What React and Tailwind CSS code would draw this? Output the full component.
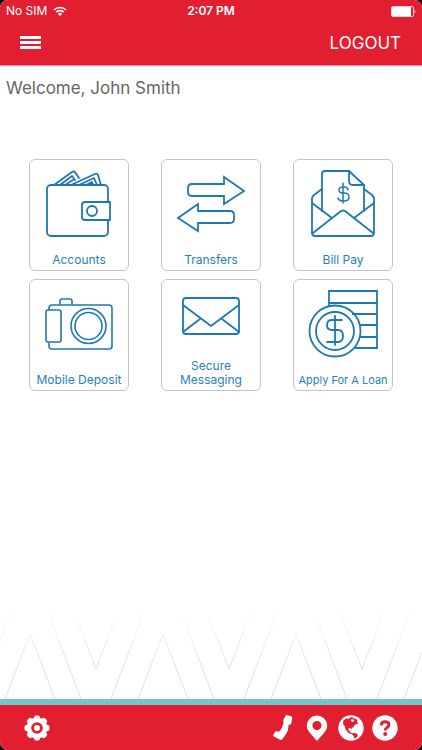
import React from "react";

const iconProps = {
  viewBox: "1 1 98 110",
  fill: "none",
  stroke: "currentColor",
  strokeWidth: 1.8,
  strokeLinejoin: "round",
  strokeLinecap: "round",
  className: "absolute inset-0 w-full h-full text-[#1f78b4]",
  "aria-hidden": true,
};

const WalletIcon = () => (
  <svg {...iconProps}>
    <path d="M79 42V30a4 4 0 0 0-4-4H22a4 4 0 0 0-4 4v43a4 4 0 0 0 4 4h53a4 4 0 0 0 4-4V62" />
    <path d="M81 43H56a3 3 0 0 0-3 3v12a3 3 0 0 0 3 3h25z" />
    <circle cx="63" cy="52" r="5" />
    <path d="M25 26l18-13q2-1 3 0l4 6M31 26l12-9 3 4M36 26l8-5M42 26l24-11q2-1 3 1l3 10M50 26l15-7 3 7M57 26l6-3 1 3" />
  </svg>
);

const TransfersIcon = () => (
  <svg {...iconProps} strokeLinejoin="miter">
    <path d="M63 25V18l20 14-20 13v-8H31q-4 0-4-4v-4q0-4 4-4z" />
    <path d="M37 52v-7L17 59l20 13v-8h32q4 0 4-4v-4q0-4-4-4z" />
  </svg>
);

const BillIcon = () => (
  <svg {...iconProps}>
    <path d="M29 52V15q0-3 3-3h24l15 14v26" />
    <path d="M56 12v10q0 4 4 4h11" />
    <path d="M29 30l-8 6q-2 2-2 4v34q0 3 3 3h56q3 0 3-3V40q0-2-2-4l-8-6" />
    <path d="M19 44l20 15M81 44L61 59M20 74l28-22q2-1 4 0l28 22" />
    <path
      d="M55 31q0-3-4-3h-1q-4 0-4 3t4 3h1q5 0 5 4t-5 4h-1q-4 0-5-3M50 24v20"
      strokeWidth="1.5"
    />
  </svg>
);

const CameraIcon = () => (
  <svg {...iconProps} strokeWidth="1.6">
    <path d="M20 31v-2q0-3 3-3h57q3 0 3 3v38q0 3-3 3H23q-3 0-3-3v-3" />
    <rect x="17" y="31" width="15" height="32" rx="2" />
    <path d="M31 25v-3q0-2 2-2h8q2 0 2 2v3" />
    <circle cx="59.5" cy="47" r="17.5" />
    <circle cx="59.5" cy="47" r="13.5" />
  </svg>
);

const MessageIcon = () => (
  <svg {...iconProps}>
    <rect x="22" y="19" width="56" height="36" rx="3" />
    <path d="M22 26l28 21 28-21M22 53l17-13M78 53L61 40" />
  </svg>
);

const LoanIcon = () => (
  <svg {...iconProps}>
    <path d="M36 27V12h48v57H62M36 24h48M59 35h25M67 46h17M66 58h18" strokeLinejoin="miter" strokeLinecap="butt" />
    <circle cx="42" cy="52" r="25.5" />
    <circle cx="42" cy="52" r="19" />
    <path d="M49 41H39q-5 0-5 5t5 5h6q5 0 5 6t-5 6H34M42 37v29" />
  </svg>
);

const tiles = [
  { label: "Accounts", Icon: WalletIcon },
  { label: "Transfers", Icon: TransfersIcon },
  { label: "Bill Pay", Icon: BillIcon },
  { label: "Mobile Deposit", Icon: CameraIcon },
  { label: "Secure Messaging", Icon: MessageIcon },
  { label: "Apply For A Loan", Icon: LoanIcon, small: true },
];

const Tile = ({ label, Icon, small }) => (
  <button
    type="button"
    className="relative flex h-28 items-end justify-center rounded-md border border-[#c4c4c4] bg-white pb-[3px] text-[#2a7fb8]"
  >
    <Icon />
    <span className={`relative leading-[14px] ${small ? "text-[11px] whitespace-nowrap" : "text-[12px]"}`}>
      {label}
    </span>
  </button>
);

const StatusBar = () => (
  <div className="grid grid-cols-3 items-center px-1.5 pt-1 text-[12px] leading-[14px]">
    <div className="flex items-center gap-1.5">
      <span>No SIM</span>
      <svg viewBox="0 0 14 10" className="h-2.5 w-3.5" fill="none" stroke="currentColor" strokeWidth="1.7" aria-hidden="true">
        <path d="M1 4a8.5 8.5 0 0 1 12 0M3.2 6.2a5.4 5.4 0 0 1 7.6 0" />
        <path d="M7 10L4.8 7.8a3.2 3.2 0 0 1 4.4 0z" fill="currentColor" stroke="none" />
      </svg>
    </div>
    <span className="text-center font-semibold">2:07 PM</span>
    <svg viewBox="0 0 25 11" className="h-[11px] w-[25px] justify-self-end" fill="currentColor" aria-hidden="true">
      <rect x="0.5" y="0.5" width="22" height="10" rx="1.5" fill="none" stroke="currentColor" strokeOpacity="0.8" />
      <rect x="1" y="1" width="19" height="9" />
      <path d="M23.5 4q2 1.5 0 3z" />
    </svg>
  </div>
);

// Faint chevron pattern that fades in towards the footer
const Chevrons = () => (
  <svg viewBox="0 0 422 87" className="block w-full" fill="none" stroke="url(#fade)" aria-hidden="true">
    <defs>
      <linearGradient id="fade" gradientUnits="userSpaceOnUse" x1="0" y1="0" x2="0" y2="87">
        <stop offset="0" stopColor="#dedede" stopOpacity="0.1" />
        <stop offset="0.6" stopColor="#dedede" stopOpacity="0.9" />
        <stop offset="1" stopColor="#dedede" />
      </linearGradient>
    </defs>
    {[-133, 0, 133, 266, 399].map((x) => (
      <path key={x} d={`M${x + 5} 87l25-65 25 65M${x + 48} 0l33 87M${x + 74} 0l22 57 22-57M${x + 111} 87l33-87`} />
    ))}
  </svg>
);

const GearIcon = () => (
  <svg viewBox="0 0 26 26" className="size-[26px]" fill="currentColor" aria-hidden="true">
    {[0, 45, 90, 135].map((angle) => (
      <rect key={angle} x="0.5" y="10" width="25" height="6" rx="2" transform={`rotate(${angle} 13 13)`} />
    ))}
    <circle cx="13" cy="13" r="10.5" />
    <circle cx="13" cy="13" r="4.4" fill="none" stroke="#e21f30" strokeWidth="2.8" />
  </svg>
);

const PhoneIcon = () => (
  <svg viewBox="0 0 26 26" className="size-[26px]" fill="currentColor" aria-hidden="true">
    <path d="M15.5 1q.6-1.200 2-.8l3.600 1q1.400.5 1.200 1.900l-.9 5.200q-.3 1.400-1.600 1.500l-1.400.2q.3 4-1.500 7.500-2 3.700-4.600 6.800-.9 1.100-2.200.5l-6.200-3.400q-1.300-.8-.5-2l2-2.600q.7-.8 1.700-.5l1.600.6q4-4 4.800-9.200l-.3-1.600q-.1-.7.300-1.400z" />
  </svg>
);

const PinIcon = () => (
  <svg viewBox="0 0 26 26" className="size-[26px]" fill="currentColor" aria-hidden="true">
    <path
      fillRule="evenodd"
      d="M13 .5A10.2 10.2 0 0 0 2.8 10.7C2.8 16 8 19.5 12 25q1 1.2 2 0c4-5.500 9.200-9 9.200-14.300A10.2 10.2 0 0 0 13 .5zM13 6a4.600 4.600 0 1 1 0 9.200A4.600 4.600 0 0 1 13 6z"
    />
  </svg>
);

const GlobeIcon = () => (
  <svg viewBox="0 0 26 26" className="size-[26px]" fill="currentColor" aria-hidden="true">
    <circle cx="13" cy="13" r="12.7" />
    <path
      fill="#e21f30"
      d="M5 6l3-2.5 3 .2 1.5-1.5 3 .3-.5 1.5 2-.8 2.5 2-.5 1.5 1.5 1.8-2 .5-2 1-1 2-1.5 1-.8 1.2-.8-1.2-1.7.3-.5 2 1.5.8.8 1.5 2 .6 2.5-.3 2.5 1 .3 1.8-2 2.3-1.8.6-.3-2.6-1.7-1.7-3.5-1.3-3-3.5-.8-3.5-1.4-1.2z"
    />
    <path d="M13 4.5h2.5l.8 1.500-1.800.8-1.500-.8z" />
  </svg>
);

const HelpIcon = () => (
  <svg viewBox="0 0 26 26" className="size-[26px]" fill="none" aria-hidden="true">
    <circle cx="13" cy="13" r="12.7" fill="currentColor" />
    <path d="M9.2 10.3q.2-3.600 3.900-3.600 3.800 0 3.800 3.100 0 1.800-2 2.900-1.700.9-1.700 2.800" stroke="#e21f30" strokeWidth="3" />
    <circle cx="13.2" cy="19" r="2" fill="#e21f30" />
  </svg>
);

const footerLinks = [
  { label: "Call", Icon: PhoneIcon },
  { label: "Locations", Icon: PinIcon },
  { label: "Website", Icon: GlobeIcon },
  { label: "Help", Icon: HelpIcon },
];

export default function App() {
  return (
    <div className="bg-black font-['Inter',sans-serif]">
      <div className="flex min-h-screen flex-col overflow-hidden rounded-lg bg-white">
        <header className="border-b border-[#f4848d] bg-[#e21f30] text-white">
          <StatusBar />
          <div className="flex h-[47px] items-center justify-between pr-[21px] pl-5">
            <button type="button" aria-label="Menu" className="flex w-[21px] flex-col gap-0.5 pt-px">
              <span className="h-[3px] bg-white" />
              <span className="h-[3px] bg-white" />
              <span className="h-[3px] bg-white" />
            </button>
            <button type="button" className="pt-0.5 text-[17px] leading-6">
              LOGOUT
            </button>
          </div>
        </header>

        <main className="flex-1">
          <h1 className="px-1.5 pt-2.5 text-[17px] leading-6 text-[#666]">Welcome, John Smith</h1>
          <div className="mt-[59px] grid grid-cols-3 gap-x-8 gap-y-2 px-[29px]">
            {tiles.map((tile) => (
              <Tile key={tile.label} {...tile} />
            ))}
          </div>
        </main>

        <Chevrons />
        <footer className="flex h-[51px] items-center justify-between border-t-[6px] border-[#72c6cb] bg-[#e21f30] px-6 text-white">
          <button type="button" aria-label="Settings">
            <GearIcon />
          </button>
          <div className="flex items-center gap-2">
            {footerLinks.map(({ label, Icon }) => (
              <button key={label} type="button" aria-label={label}>
                <Icon />
              </button>
            ))}
          </div>
        </footer>
      </div>
    </div>
  );
}
